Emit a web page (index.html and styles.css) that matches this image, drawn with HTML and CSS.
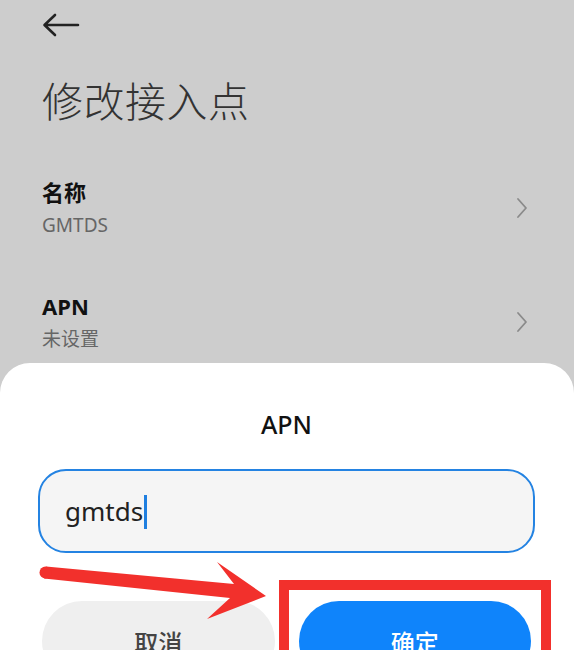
FILE: index.html
```html
<!DOCTYPE html>
<html lang="zh-CN">
<head>
<meta charset="utf-8">
<title>修改接入点</title>
<link rel="stylesheet" href="styles.css">
</head>
<body>
<div class="screen">
  <div class="page">
    <div class="topbar">
      <svg class="back" width="40" height="24" viewBox="0 0 40 24">
        <path d="M36 12 H3 M13 2 L2.5 12 L13 22" fill="none" stroke="#222" stroke-width="2.6" stroke-linecap="round" stroke-linejoin="round"/>
      </svg>
    </div>
    <h1 class="title">修改接入点</h1>
    <div class="list">
      <div class="row">
        <div class="row-text">
          <div class="label">名称</div>
          <div class="value">GMTDS</div>
        </div>
        <svg class="chev" width="12" height="22" viewBox="0 0 12 22"><path d="M2 2 L10 11 L2 20" fill="none" stroke="#8a8a8a" stroke-width="1.8" stroke-linecap="round" stroke-linejoin="round"/></svg>
      </div>
      <div class="row">
        <div class="row-text">
          <div class="label">APN</div>
          <div class="value">未设置</div>
        </div>
        <svg class="chev" width="12" height="22" viewBox="0 0 12 22"><path d="M2 2 L10 11 L2 20" fill="none" stroke="#8a8a8a" stroke-width="1.8" stroke-linecap="round" stroke-linejoin="round"/></svg>
      </div>
    </div>
  </div>

  <div class="sheet">
    <div class="sheet-title">APN</div>
    <div class="input">
      <span class="input-text">gmtds</span><span class="caret"></span>
    </div>
    <div class="buttons">
      <div class="btn btn-cancel">取消</div>
      <div class="btn btn-ok">确定</div>
    </div>
  </div>

  <svg class="annot" width="574" height="650" viewBox="0 0 574 650">
    <polygon points="46,566.5 234,584 217,562 266,596 207,619 230,598 44,578.5" fill="#f2302c"/>
    <circle cx="45.5" cy="572.5" r="6" fill="#f2302c"/>
    <rect x="284" y="585" width="262" height="100" fill="none" stroke="#f2302c" stroke-width="10"/>
  </svg>
</div>
</body>
</html>
```

FILE: styles.css
```css
html, body {
  margin: 0;
  padding: 0;
}
body {
  background: #cdcdcd;
  font-family: "Noto Sans", "Noto Sans CJK SC", sans-serif;
}
.screen {
  position: relative;
  width: 574px;
  height: 650px;
  overflow: hidden;
  background: #cdcdcd;
}
.page {
  padding: 0 46px 0 42px;
}
.topbar {
  height: 50px;
  display: flex;
  align-items: flex-start;
}
.back {
  display: block;
  margin-top: 13px;
}
.title {
  margin: 29px 0 0 0;
  font-family: "Noto Sans CJK SC", sans-serif;
  font-size: 41px;
  line-height: 41px;
  font-weight: 200;
  color: #333;
  letter-spacing: 0.5px;
}
.list {
  margin-top: 31px;
}
.row {
  height: 114px;
  display: flex;
  align-items: center;
  justify-content: space-between;
}
.row-text {
  display: flex;
  flex-direction: column;
  gap: 8px;
}
.label {
  font-family: "Noto Sans", "Noto Sans CJK SC", sans-serif;
  font-size: 22px;
  line-height: 26px;
  font-weight: 700;
  color: #111;
}
.value {
  font-family: "Noto Sans", "Noto Sans CJK SC", sans-serif;
  font-size: 19px;
  line-height: 24px;
  color: #666;
}
.chev {
  display: block;
}
.sheet {
  position: absolute;
  left: 0;
  right: 0;
  top: 363px;
  bottom: 0;
  background: #fff;
  border-radius: 30px 30px 0 0;
  padding: 0 39px 0 38px;
}
.sheet-title {
  margin-top: 46px;
  text-align: center;
  font-size: 25px;
  line-height: 30px;
  font-weight: 500;
  color: #111;
}
.input {
  margin-top: 30px;
  height: 80px;
  border: 2px solid #2483e2;
  border-radius: 28px;
  background: #f5f5f5;
  display: flex;
  align-items: center;
  padding-left: 25px;
}
.input-text {
  font-size: 26px;
  line-height: 34px;
  color: #222;
}
.caret {
  display: inline-block;
  width: 2.5px;
  height: 34px;
  background: #1f7fe0;
  margin-left: 1px;
  margin-top: 2px;
}
.buttons {
  display: flex;
  gap: 24px;
  margin: 48px 4px 0 4px;
}
.btn {
  flex: 1;
  height: 80px;
  border-radius: 40px;
  display: flex;
  align-items: center;
  justify-content: center;
  font-family: "Noto Sans CJK SC", sans-serif;
  font-size: 24px;
  font-weight: 500;
}
.btn-cancel {
  background: #efefef;
  color: #444;
}
.btn-ok {
  background: #0f84fb;
  color: #fff;
}
.annot {
  position: absolute;
  left: 0;
  top: 0;
  pointer-events: none;
}
```
